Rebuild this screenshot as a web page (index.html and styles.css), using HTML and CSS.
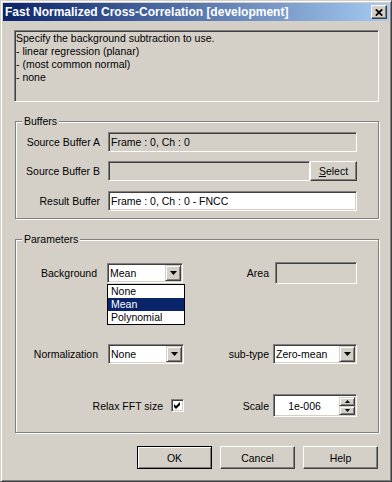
FILE: index.html
```html
<!DOCTYPE html>
<html lang="en">
<head>
    <meta charset="UTF-8">
    <title>Fast Normalized Cross-Correlation [development]</title>
    <link rel="stylesheet" href="styles.css">
</head>
<body>
    <div class="window">
        <div class="titlebar">
            <span class="title">Fast Normalized Cross-Correlation [development]</span>
            <div class="close-btn">
                <svg width="8" height="7" viewBox="0 0 8 7"><path d="M0.8 0.3 L7.2 6.7 M7.2 0.3 L0.8 6.7" stroke="#000" stroke-width="1.7"/></svg>
            </div>
        </div>

        <div class="client">
            <div class="memo sunken">
                Specify the background subtraction to use.<br>
                - linear regression (planar)<br>
                - (most common normal)<br>
                - none
            </div>

            <!-- Buffers -->
            <div class="group buffers">
                <span class="legend">Buffers</span>
                <div class="row">
                    <span class="row-label">Source Buffer A</span>
                    <div class="edit sunken disabled wide">Frame : 0, Ch : 0</div>
                </div>
                <div class="row row-b">
                    <span class="row-label">Source Buffer B</span>
                    <div class="edit sunken disabled short"></div>
                    <div class="btn select-btn"><u>S</u>elect</div>
                </div>
                <div class="row">
                    <span class="row-label">Result Buffer</span>
                    <div class="edit sunken wide">Frame : 0, Ch : 0 - FNCC</div>
                </div>
            </div>

            <!-- Parameters -->
            <div class="group params">
                <span class="legend">Parameters</span>
                <div class="prow">
                    <div class="pleft">
                        <span>Background</span>
                        <div class="combo sunken bg-combo">
                            <span class="combo-text">Mean</span>
                            <span class="combo-btn"><svg width="7" height="4" viewBox="0 0 7 4"><polygon points="0,0 7,0 3.5,4" fill="#000"/></svg></span>
                            <ul class="dropdown">
                                <li>None</li>
                                <li class="selected">Mean</li>
                                <li>Polynomial</li>
                            </ul>
                        </div>
                    </div>
                    <div class="pright">
                        <span>Area</span>
                        <div class="edit sunken disabled area"></div>
                    </div>
                </div>
                <div class="prow row2">
                    <div class="pleft">
                        <span>Normalization</span>
                        <div class="combo sunken">
                            <span class="combo-text">None</span>
                            <span class="combo-btn"><svg width="7" height="4" viewBox="0 0 7 4"><polygon points="0,0 7,0 3.5,4" fill="#000"/></svg></span>
                        </div>
                    </div>
                    <div class="pright">
                        <span>sub-type</span>
                        <div class="combo sunken subtype">
                            <span class="combo-text">Zero-mean</span>
                            <span class="combo-btn"><svg width="7" height="4" viewBox="0 0 7 4"><polygon points="0,0 7,0 3.5,4" fill="#000"/></svg></span>
                        </div>
                    </div>
                </div>
                <div class="prow row3">
                    <div class="pleft relax">
                        <span>Relax FFT size</span>
                        <div class="checkbox sunken">
                            <svg width="7" height="7" viewBox="0 0 7 7"><polygon points="0,2 2,4 6,0 6,3 2,7 0,5" fill="#000"/></svg>
                        </div>
                    </div>
                    <div class="pright">
                        <span>Scale</span>
                        <div class="spin sunken">
                            <span class="spin-text">1e-006</span>
                            <div class="spin-btns">
                                <span class="spin-btn"><svg width="5" height="3" viewBox="0 0 5 3"><polygon points="0,3 5,3 2.5,0" fill="#000"/></svg></span>
                                <span class="spin-btn"><svg width="5" height="3" viewBox="0 0 5 3"><polygon points="0,0 5,0 2.5,3" fill="#000"/></svg></span>
                            </div>
                        </div>
                    </div>
                </div>
            </div>

            <div class="buttons">
                <div class="btn dlg-btn default">OK</div>
                <div class="btn dlg-btn">Cancel</div>
                <div class="btn dlg-btn">Help</div>
            </div>
        </div>
    </div>
</body>
</html>
```

FILE: styles.css
```css
body {
    margin: 0;
    background: #d4d0c8;
    font-family: "Liberation Sans", Arial, sans-serif;
    font-size: 10.5px;
    color: #000;
}

.window {
    width: 392px;
    height: 482px;
    box-sizing: border-box;
    border: 1px solid;
    border-color: #d4d0c8 #404040 #404040 #d4d0c8;
    box-shadow: inset 1px 1px 0 #fff, inset -1px -1px 0 #808080;
    padding: 2px;
    background: #d4d0c8;
}

.titlebar {
    height: 18px;
    display: flex;
    align-items: center;
    justify-content: space-between;
    padding: 0 2px;
    background: linear-gradient(to right, #0a246a, #a6caf0);
}

.title {
    color: #fff;
    font-weight: bold;
    font-size: 12px;
}

.close-btn {
    width: 16px;
    height: 14px;
    box-sizing: border-box;
    border: 1px solid;
    border-color: #fff #404040 #404040 #fff;
    box-shadow: inset -1px -1px 0 #808080;
    background: #d4d0c8;
    display: flex;
    align-items: center;
    justify-content: center;
}

.client {
    padding: 9px 10px 0 11px;
}

/* 3D borders */
.sunken {
    border: 1px solid;
    border-color: #808080 #fff #fff #808080;
    box-shadow: inset 1px 1px 0 #404040, inset -1px -1px 0 #d4d0c8;
}

.btn {
    box-sizing: border-box;
    border: 1px solid;
    border-color: #fff #404040 #404040 #fff;
    box-shadow: inset -1px -1px 0 #808080;
    background: #d4d0c8;
    display: flex;
    align-items: center;
    justify-content: center;
}

.memo {
    height: 72px;
    box-sizing: border-box;
    padding: 1px 1px;
    line-height: 13px;
    background: #d4d0c8;
}

/* group boxes */
.group {
    position: relative;
    box-sizing: border-box;
    width: 364px;
    margin-left: 1px;
    border: 1px solid #808080;
    box-shadow: inset 1px 1px 0 #fff, 1px 1px 0 #fff;
}

.legend {
    position: absolute;
    top: -7px;
    left: 6px;
    padding: 0 2px;
    line-height: 13px;
    background: #d4d0c8;
}

.buffers {
    margin-top: 19px;
    height: 98px;
    padding-top: 10px;
}

.row {
    display: flex;
    align-items: center;
    height: 20px;
}

.row + .row {
    margin-top: 10px;
}

.row.row-b {
    margin-top: 9px;
}

.row-label {
    width: 84px;
    text-align: right;
    margin-right: 8px;
}

.edit {
    height: 20px;
    box-sizing: border-box;
    padding-left: 2px;
    display: flex;
    align-items: center;
    background: #fff;
    white-space: nowrap;
}

.edit.disabled {
    background: #d4d0c8;
}

.edit.wide {
    width: 249px;
}

.edit.short {
    width: 202px;
}

.select-btn {
    width: 47px;
    height: 20px;
}

.params {
    margin-top: 20px;
    height: 194px;
    padding-top: 21px;
}

.prow {
    display: flex;
    align-items: center;
    height: 23px;
}

.prow.row2 {
    margin-top: 58px;
}

.prow.row3 {
    margin-top: 29px;
}

.pleft {
    width: 168px;
    display: flex;
    justify-content: flex-end;
    align-items: center;
    gap: 10px;
}

.pleft.relax {
    gap: 8px;
}

.pright {
    width: 173px;
    display: flex;
    justify-content: flex-end;
    align-items: center;
    gap: 4px;
}

.edit.area {
    width: 82px;
    height: 22px;
    margin-left: 2px;
}

/* combo boxes */
.combo {
    position: relative;
    width: 76px;
    height: 20px;
    box-sizing: border-box;
    display: flex;
    align-items: center;
    background: #fff;
}

.combo.bg-combo {
    margin-right: 1px;
}

.combo.subtype {
    width: 84px;
}

.combo-text {
    flex: 1;
    padding-left: 2px;
    white-space: nowrap;
}

.combo-btn {
    width: 16px;
    height: 16px;
    box-sizing: border-box;
    margin-right: 1px;
    border: 1px solid;
    border-color: #d4d0c8 #404040 #404040 #d4d0c8;
    box-shadow: inset 1px 1px 0 #fff, inset -1px -1px 0 #808080;
    background: #d4d0c8;
    display: flex;
    align-items: center;
    justify-content: center;
}

.dropdown {
    position: absolute;
    top: 20px;
    left: -1px;
    width: 78px;
    box-sizing: border-box;
    margin: 0;
    padding: 0;
    list-style: none;
    border: 1px solid #000;
    background: #fff;
    z-index: 5;
}

.dropdown li {
    line-height: 13px;
    padding-left: 3px;
}

.dropdown li.selected {
    background: #0a246a;
    color: #fff;
}

.checkbox {
    width: 13px;
    height: 13px;
    box-sizing: border-box;
    background: #fff;
    display: flex;
    align-items: center;
    justify-content: center;
}

/* spin edit */
.spin {
    width: 84px;
    height: 23px;
    box-sizing: border-box;
    display: flex;
    align-items: center;
    background: #fff;
}

.spin-text {
    flex: 1;
    text-align: center;
    padding-right: 4px;
}

.spin-btns {
    display: flex;
    flex-direction: column;
    margin-right: 1px;
}

.spin-btn {
    width: 16px;
    height: 9px;
    box-sizing: border-box;
    border: 1px solid;
    border-color: #d4d0c8 #404040 #404040 #d4d0c8;
    box-shadow: inset 1px 1px 0 #fff, inset -1px -1px 0 #808080;
    background: #d4d0c8;
    display: flex;
    align-items: center;
    justify-content: center;
}

.buttons {
    display: flex;
    justify-content: flex-end;
    gap: 8px;
    margin-top: 13px;
    margin-right: 1px;
}

.dlg-btn {
    width: 75px;
    height: 23px;
}

.dlg-btn.default {
    border-color: #000;
    box-shadow: inset 1px 1px 0 #fff, inset -1px -1px 0 #808080;
}
```
